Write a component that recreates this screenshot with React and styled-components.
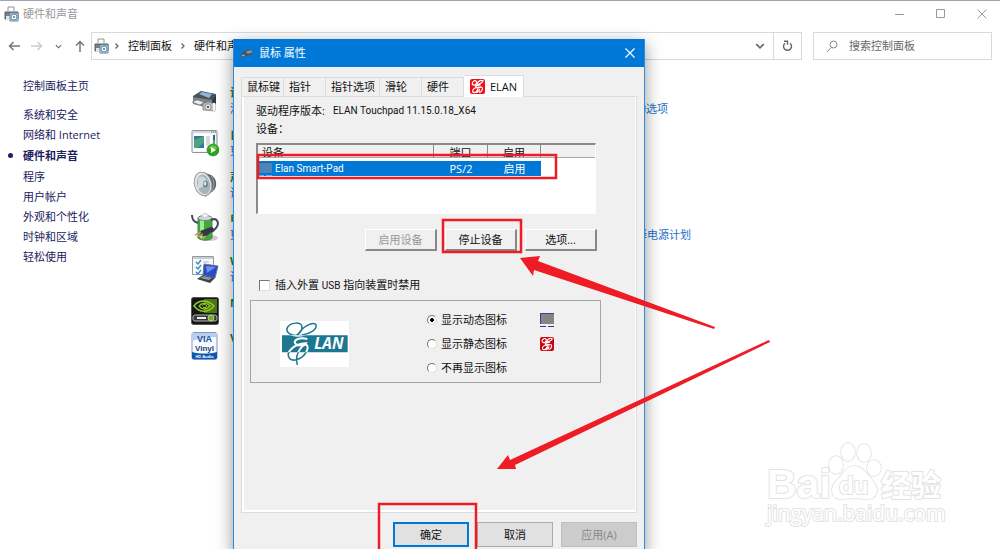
import React from "react";
import styled, { createGlobalStyle, css } from "styled-components";

const GlobalStyle = createGlobalStyle`
  * { box-sizing: border-box; }
  html, body { margin: 0; height: 100%; overflow: hidden; background: #fff; }
  body, button, input, table {
    font-family: "Open Sans", "Noto Sans CJK SC", sans-serif;
    font-size: 11px;
    line-height: 18px;
  }
  button { padding: 0; border: 0; background: none; color: inherit; white-space: nowrap; }
  a { color: inherit; text-decoration: none; }
  svg { display: block; flex: none; }
`;

/* ---------- Control panel window ---------- */

const Desktop = styled.div`
  position: relative;
  min-height: 100vh;
  overflow: hidden;
  border-top: 1px solid #a0a5b5;
  background: #fff;
`;

const WindowBar = styled.header`
  display: flex;
  align-items: center;
  gap: 4px;
  height: 26px;
  padding: 0 12px 0 4px;
  color: #999;
`;

const WindowTitle = styled.span`
  flex: 1;
`;

const WindowControls = styled.div`
  display: flex;
  gap: 29px;
  color: #999;
`;

const IconButton = styled.button`
  display: flex;
  align-items: center;
  justify-content: center;
  width: ${(p) => p.$width || 12}px;
  height: 24px;
  color: ${(p) => p.$color || "inherit"};
`;

const NavBar = styled.nav`
  display: flex;
  align-items: center;
  padding: 5px 8px 0 8px;
`;

const HistoryButtons = styled.div`
  display: flex;
  align-items: center;
  justify-content: space-between;
  width: 78px;
  margin-right: 5px;
`;

const AddressBox = styled.div`
  display: flex;
  flex: 1;
  align-items: center;
  gap: 4px;
  height: 28px;
  padding-left: 2px;
  border: 1px solid #d9d9d9;
  color: #111;
`;

const Crumb = styled.a`
  margin: 0 3px;
`;

const Spacer = styled.span`
  flex: 1;
`;

const RefreshCell = styled.div`
  display: flex;
  align-items: center;
  justify-content: center;
  width: 28px;
  height: 26px;
  margin-left: 3px;
  border-left: 1px solid #d9d9d9;
`;

const SearchBox = styled.label`
  display: flex;
  align-items: center;
  gap: 10px;
  width: 179px;
  height: 28px;
  margin-left: 11px;
  padding-left: 12px;
  border: 1px solid #d9d9d9;
`;

const SearchInput = styled.input`
  flex: 1;
  min-width: 0;
  padding: 0;
  border: 0;
  outline: 0;
  background: transparent;
  &::placeholder { color: #666; opacity: 1; }
`;

const Content = styled.div`
  display: flex;
  padding-top: 16px;
`;

const Sidebar = styled.aside`
  width: 191px;
  padding-left: 23px;
  color: #1b2160;
  line-height: 20px;
`;

const SideHome = styled.a`
  display: block;
  margin-bottom: 9px;
`;

const SideItem = styled.a`
  position: relative;
  display: block;
  ${(p) =>
    p.$active &&
    css`
      padding: 1px 0;
      font-weight: 700;
      &::before {
        content: "";
        position: absolute;
        left: -15px;
        top: 8px;
        width: 5px;
        height: 5px;
        border-radius: 50%;
        background: #1b2160;
      }
    `}
`;

const CategoryList = styled.main`
  flex: 1;
  padding-top: 11px;
`;

const Category = styled.section`
  display: flex;
  gap: 11px;
  height: ${(p) => (p.$compact ? 35 : 42)}px;
`;

const CategoryBody = styled.div`
  line-height: 16px;
  margin-top: -2px;
`;

const CategoryTitle = styled.a`
  display: block;
  color: #15801e;
  font-weight: 700;
`;

const TaskRow = styled.div`
  display: flex;
  justify-content: space-between;
  width: ${(p) => p.$width || 200}px;
  color: #1a6fc9;
`;

/* ---------- Mouse properties dialog ---------- */

const Dialog = styled.section`
  position: absolute;
  left: 233px;
  top: 38px;
  width: 412px;
  border: 1px solid #2a8be0;
  border-top: 0;
  background: #f0f0f0;
  color: #111;
  box-shadow: 0 5px 16px rgba(0, 0, 0, 0.42);
`;

const DialogBar = styled.header`
  display: flex;
  align-items: center;
  height: 28px;
  padding: 0 8px 0 7px;
  gap: 5px;
  background: #0078d7;
  color: #fff;
`;

const DialogBody = styled.div`
  padding: 8px 7px 6px;
`;

const TabList = styled.div`
  display: flex;
  align-items: flex-end;
  height: 21px;
`;

const Tab = styled.button`
  display: flex;
  align-items: center;
  gap: 5px;
  min-width: 42px;
  height: 19px;
  padding: 0 4px 0 5px;
  border: 1px solid #dcdcdc;
  border-width: 1px 1px 0 0;
  &:first-child { padding-right: 3px; border-left-width: 1px; }
  ${(p) =>
    p.$active &&
    css`
      position: relative;
      height: 22px;
      margin-bottom: -1px;
      padding: 0 6px;
      background: #fff;
    `}
`;

const TabPanel = styled.div`
  padding: 5px 39px 129px 14px;
  border: 1px solid #dcdcdc;
  box-shadow: inset 2px -2px 0 #fff, inset -1px 0 0 #fff;
`;

const Latin = styled.span`
  font-family: Roboto, sans-serif;
  font-size: 10px;
`;

const InfoLine = styled.div`
  display: flex;
  gap: 8px;
`;

const ListFrame = styled.div`
  height: 71px;
  margin-top: 5px;
  margin-right: 1px;
  overflow: hidden;
  border: 1px solid #fff;
  border-top: 2px solid #8a8a8a;
  border-left: 2px solid #8a8a8a;
  background: #fff;
`;

const DeviceTable = styled.table`
  width: 100%;
  table-layout: fixed;
  border-collapse: separate;
  border-spacing: 0;
`;

const HeadCell = styled.th`
  width: ${(p) => (p.$width ? p.$width + "px" : "auto")};
  height: 13px;
  padding: 0 0 0 ${(p) => (p.$left ? 4 : 0)}px;
  border-right: ${(p) => (p.$width ? "1px solid #8a8a8a" : "0")};
  border-bottom: 1px solid #aaa;
  background: #f0f0f0;
  font-weight: 400;
  text-align: ${(p) => (p.$left ? "left" : "center")};
`;

const HeadClip = styled.div`
  height: 12px;
  overflow: hidden;
  line-height: 16px;
`;

const Cell = styled.td`
  height: 18px;
  padding: 0;
  border-top: 3px solid #fff;
  background: #0078d7;
  color: #fff;
  line-height: 15px;
  text-align: center;
`;

const DeviceName = styled.div`
  display: flex;
  align-items: center;
  gap: 3px;
  height: 15px;
`;

const ButtonRow = styled.div`
  display: flex;
  justify-content: flex-end;
  gap: 8px;
  margin-top: ${(p) => (p.$footer ? 9 : 15)}px;
`;

const ClassicButton = styled.button`
  width: 72px;
  height: 22px;
  border: 1px solid #fff;
  border-right: 2px solid #888;
  border-bottom: 2px solid #888;
  background: #f0f0f0;
  line-height: 18px;
  &:disabled { color: #999; }
`;

const DialogButton = styled.button`
  width: 76px;
  height: 25px;
  border: 1px solid #adadad;
  background: #e1e1e1;
  ${(p) => p.$primary && "border: 2px solid #0078d7;"}
  &:disabled { border-color: #bfbfbf; background: #ccc; color: #888; }
`;

const CheckLabel = styled.label`
  display: flex;
  align-items: center;
  gap: 5px;
  margin: 25px 0 5px 3px;
`;

const CheckBox = styled.input`
  appearance: none;
  width: 11px;
  height: 11px;
  margin: 0;
  border: 1px solid #ddd;
  border-top-color: #777;
  border-left-color: #777;
  background: #fff;
`;

const IconGroup = styled.fieldset`
  display: flex;
  align-items: center;
  gap: 78px;
  height: 83px;
  margin: 0 -4px 0 -6px;
  padding: 6px 0 2px 29px;
  border: 1px solid #a6a6a6;
`;

const RadioList = styled.div`
  display: flex;
  flex-direction: column;
`;

const RadioRow = styled.div`
  display: flex;
  align-items: center;
  height: 24px;
`;

const RadioLabel = styled.label`
  display: flex;
  align-items: center;
  gap: 4px;
  width: 113px;
`;

const Radio = styled.input`
  appearance: none;
  width: 10px;
  height: 10px;
  margin: 0;
  border: 1px solid #ddd;
  border-top-color: #777;
  border-left-color: #777;
  border-radius: 50%;
  background: #fff;
  &:checked { background: radial-gradient(circle, #000 0 2px, #fff 2px); }
`;

/* ---------- Overlays ---------- */

const Annotations = styled.svg`
  position: absolute;
  left: 0;
  top: -1px;
  pointer-events: none;
`;

const Watermark = styled.div`
  position: absolute;
  right: 54px;
  top: 440px;
  width: 180px;
  height: 88px;
  color: #fff;
  -webkit-text-stroke: 2px #e3e3e3;
  paint-order: stroke fill;
  white-space: nowrap;
`;

const MarkText = styled.span`
  position: absolute;
  left: ${(p) => p.$x}px;
  top: ${(p) => p.$y}px;
  font-family: ${(p) => p.$family || '"Liberation Sans", sans-serif'};
  font-size: ${(p) => p.$size}px;
  font-weight: ${(p) => p.$weight || 700};
  line-height: ${(p) => p.$size}px;
`;

/* ---------- Drawings ---------- */

const PrinterDisc = () => (
  <svg width="15" height="16" viewBox="0 0 15 16">
    <path d="M4 5V1h6v4" fill="#fff" stroke="#8b9299" />
    <path d="M1 6h13v7H1z" fill="#777f86" stroke="#555e66" />
    <path d="M2 10h5v4H2z" fill="#dfe5e8" />
    <path d="M6 7h8v8H6z" fill="#c9dde9" stroke="#6d8495" />
    <circle cx="10" cy="11" r="3" fill="#f5fbff" stroke="#5b89a8" />
    <circle cx="10" cy="11" r="1" fill="#4b7a9c" />
  </svg>
);

const Chevron = ({ down, size = 8 }) => (
  <svg width={size} height={size} viewBox="0 0 8 8" fill="none" stroke="#666" strokeWidth="1.3">
    <path d={down ? "M1 2.5l3 3 3-3" : "M2.5 1.500l2.500 2.500-2.500 2.500"} />
  </svg>
);

const Arrow = ({ rotate = 0, color = "#777" }) => (
  <svg width="12" height="12" viewBox="0 0 12 12" fill="none" stroke={color} strokeWidth="1.5">
    <path d="M1 6h11M5.500 2L1.500 6l4 4" transform={`rotate(${rotate} 6 6)`} />
  </svg>
);

const DevicesIcon = () => (
  <svg width="28" height="28" viewBox="0 0 28 28">
    <path d="M2 9l8-5 15 3-4 7L2 12z" fill="#4b5159" />
    <path d="M8 7l3-2 10 2-3 4z" fill="#8bb5dc" />
    <path d="M2 10l19 3v9L2 17z" fill="#7d8389" />
    <path d="M21 13l4-6v9l-4 6z" fill="#333941" />
    <path d="M1 15l5-2 7 2-4 3z" fill="#eef0f1" stroke="#777" strokeWidth=".6" />
    <path d="M12 16h3l1-1h3l1 1h4v8l-12-1z" fill="#c7c7c2" stroke="#777" strokeWidth=".7" />
    <circle cx="17" cy="20" r="3.2" fill="#eee" stroke="#888" />
    <circle cx="17" cy="20" r="1.3" fill="#666" />
    <path d="M22 16h2v8h-2z" fill="#f4f4ee" />
  </svg>
);

const AutoplayIcon = () => (
  <svg width="28" height="28" viewBox="0 0 28 28">
    <rect x="1" y="1.5" width="25" height="22" rx="1" fill="#f3f4f5" stroke="#8d9296" />
    <path d="M2 2h23v2H2z" fill="#d5d8da" />
    <path d="M20 3h1M22 3h1M24 3h1" stroke="#666" />
    <path d="M3 5h18v17H3z" fill="#fff" />
    <path d="M3 7h10v12H3z" fill="#3972a5" />
    <path d="M3 11l10-4v6l-6 6H3z" fill="#4da483" />
    <path d="M15 8h4M15 10h4M15 12h4M15 14h4M15 16h3" stroke="#b5b5b5" />
    <path d="M23 6v9" stroke="#2669a8" strokeWidth="2" />
    <path d="M23 11v4" stroke="#5aac61" strokeWidth="2" />
    <circle cx="22" cy="21" r="6" fill="#29a51d" stroke="#198713" strokeWidth=".6" />
    <path d="M17.500 19a5 5 0 0 1 9 0c-3 2-6 2-9 0" fill="#66ca4b" />
    <path d="M20 18v6l5-3z" fill="#fff" />
  </svg>
);

const SpeakerIcon = () => (
  <svg width="28" height="28" viewBox="0 0 28 28">
    <path d="M12 1l8 3c6 3 7 12 2 16l-8 6z" fill="#5d6266" />
    <path d="M20 5c4 4 4 13-1 16" stroke="#a4a7a9" fill="none" />
    <ellipse cx="12" cy="13" rx="8.500" ry="12" fill="#e3e5e6" stroke="#9a9d9f" transform="rotate(-14 12 13)" />
    <ellipse cx="12.500" cy="13.500" rx="6.500" ry="10" fill="#a7b3ba" transform="rotate(-14 12 13)" />
    <path d="M7 7c4-4 9 0 10 6L7 18z" fill="#ced9de" />
    <ellipse cx="14.500" cy="13" rx="2.500" ry="3.500" fill="#74838c" />
    <ellipse cx="14" cy="12.500" rx="1.400" ry="2" fill="#d6e1e7" />
  </svg>
);

const PowerIcon = () => (
  <svg width="28" height="28" viewBox="0 0 28 28">
    <ellipse cx="19" cy="25" rx="8" ry="3" fill="#ccc" />
    <path d="M7 5h14v20c-3 3-11 3-14 0z" fill="#3da83c" stroke="#4f8351" />
    <path d="M9 6h4v20l-4-1z" fill="#98ed86" />
    <ellipse cx="14" cy="5" rx="7" ry="2.500" fill="#d4dad6" stroke="#7a817c" />
    <path d="M11 3v-1c1-2 5-2 6 0v1c-1 2-5 2-6 0" fill="#eef4f8" stroke="#a4b1b9" strokeWidth=".6" />
    <path d="M1 2c0 5 2 7 6 8M20 7c6-3 9 3 5 8l-4 4" fill="none" stroke="#414a60" strokeWidth="2" />
    <path d="M9 18l11-4c2 0 4 2 2 4l-8 6-5-2z" fill="#343742" />
    <path d="M4 22l6-3M6 24l6-3M10 26l5-3" stroke="#c29a5b" strokeWidth="1.5" />
  </svg>
);

const MobilityIcon = () => (
  <svg width="28" height="28" viewBox="0 0 28 28">
    <path d="M1.500 1.500h21v18h-21z" fill="#f7f9fb" stroke="#929aa2" />
    <path d="M2 2h20v2H2z" fill="#c6ccd2" />
    <path d="M5 7l2 2 3-4M5 12l2 2 3-4M5 17l2 2 3-4" fill="none" stroke="#2e8fc7" strokeWidth="1.400" />
    <path d="M12 7h6M12 12h4M12 17h3" stroke="#b3b8bd" />
    <path d="M13 9l14 2-3 12-12-3z" fill="#2849c8" stroke="#737a87" />
    <path d="M15 11l10 1-9 6z" fill="#6c90f0" />
    <path d="M6 24l6-4 12 3-5 5z" fill="#3b424c" />
    <path d="M9 23l4-2 8 2-3 2z" fill="#8d98a5" />
  </svg>
);

const NvidiaIcon = () => (
  <svg width="28" height="28" viewBox="0 0 28 28">
    <rect x=".500" y=".500" width="27" height="27" rx="2" fill="#151515" stroke="#555" />
    <path d="M13 2h13v14H13z" fill="#4d7613" />
    <path d="M3 9c4-6 13-7 20 0-6 7-14 7-20 0z" fill="none" stroke="#8cc928" strokeWidth="1.600" />
    <path d="M8 9c2-3 7-4 11 0-4 4-8 4-11 0z" fill="#182209" stroke="#8cc928" strokeWidth="1.300" />
    <path d="M11 9c1-2 3-2 5 0-1 2-3 2-4 1" fill="none" stroke="#a7dc49" />
    <rect x="2" y="18" width="24" height="6" rx="2" fill="#373737" stroke="#b5b5b5" />
    <path d="M6 21h9" stroke="#eee" strokeWidth="2" />
    <circle cx="20" cy="21" r="3" fill="#77aa36" stroke="#aad767" />
  </svg>
);

const ViaIcon = () => (
  <svg width="28" height="28" viewBox="0 0 28 28">
    <rect x="1" y=".500" width="25" height="27" rx="2" fill="#f8fbff" stroke="#7d9bc6" />
    <path d="M1 1h25v4c-8 0-17 1-25 4z" fill="#b8cfee" />
    <text x="13.500" y="10" textAnchor="middle" fontFamily="Liberation Sans" fontSize="9" fontWeight="700" fill="#1551a0">VIA</text>
    <text x="13.500" y="19" textAnchor="middle" fontFamily="Liberation Sans" fontSize="8" fontWeight="700" fill="#173a80">Vinyl</text>
    <path d="M1 20c8 2 17 2 25 0v6l-1 1H2l-1-1z" fill="#0e56ae" />
    <text x="13.500" y="26" textAnchor="middle" fontFamily="Liberation Sans" fontSize="4" fontWeight="700" fill="#fff">HD Audio</text>
  </svg>
);

const MouseIcon = () => (
  <svg width="13" height="12" viewBox="0 0 13 12">
    <path d="M0 8c0-3 7-6 11-5 3 1 1 4-3 5-3 2-8 3-8 0z" fill="#4a535b" />
    <path d="M5 5c3-2 6-2 7 0-2 1-4 1-5 2z" fill="#8f979d" />
    <path d="M1 8l3 1" stroke="#bbb" />
  </svg>
);

const ElanBadge = ({ size = 15, color = "#f20d17" }) => (
  <svg width={size} height={size} viewBox="0 0 44 44">
    <rect width="44" height="44" rx="6" fill={color} />
    <g fill="none" stroke="#fff" strokeWidth="3.500">
      <path d="M18 17C5 20 4 12 10 7c6-5 12 0 9 5l-4 6" />
      <path d="M19 16C24 7 32 2 38 5c1 5-8 9-19 12h12" />
      <path d="M27 18c-8 0-13 3-9 7 3 2 7 1 9-1C15 24 6 30 8 37c3 6 12 2 15-7 2 9-3 12-6 8" />
      <path d="M27 26c8-6 13 1 7 9-6 8-11 1-5-6" />
    </g>
  </svg>
);

const PadIcon = ({ selected }) => (
  <svg width="14" height="14" viewBox="0 0 14 14">
    <path d="M0 0h14v11H0z" fill={selected ? "#4b84b8" : "#858585"} />
    <path d="M0 11V0h14" fill="none" stroke={selected ? "#2b5fae" : "#3c3ca3"} strokeWidth="2" />
    <path d="M0 13.500h6M8 13.500h6" stroke={selected ? "#58aef5" : "#3434a0"} />
  </svg>
);

const ELAN_SCRIPT =
  "M72 42C34 50 13 33 23 18C35 3 64 2 66 18C67 28 58 38 50 42M54 42C66 17 99 1 108 11C112 24 90 39 66 42M82 54C58 48 38 57 46 68C52 76 68 74 76 67C44 69 19 91 26 108C33 125 63 117 77 96C89 77 80 62 66 77C51 94 46 113 52 132";

const ElanLogo = () => (
  <svg width="69" height="46" viewBox="0 0 207 138" role="img" aria-label="ELAN">
    <defs>
      <clipPath id="elan-band">
        <path d="M6 43h197v51H6z" />
      </clipPath>
    </defs>
    <path d="M0 0h207v138H0z" fill="#fff" />
    <path d="M6 43h197v51H6z" fill="#1b7890" />
    <path d={ELAN_SCRIPT} fill="none" stroke="#1b7890" strokeWidth="4.500" />
    <path d={ELAN_SCRIPT} fill="none" stroke="#fff" strokeWidth="6" clipPath="url(#elan-band)" />
    <text x="103" y="85" fontFamily="Open Sans, sans-serif" fontSize="46" fontWeight="700" fontStyle="italic" fill="#fff">LAN</text>
  </svg>
);

/* ---------- Data ---------- */

const SIDE_ITEMS = ["系统和安全", "网络和 Internet", "硬件和声音", "程序", "用户帐户", "外观和个性化", "时钟和区域", "轻松使用"];

const CATEGORIES = [
  { title: "设备和打印机", Icon: DevicesIcon, tasks: ["添加设备", "更改 Windows To Go 启动选项"], width: 438 },
  { title: "自动播放", Icon: AutoplayIcon, tasks: ["更改媒体或设备的默认设置"] },
  { title: "声音", Icon: SpeakerIcon, tasks: ["调整系统音量"] },
  { title: "电源选项", Icon: PowerIcon, tasks: ["更改电池设置", "选择电源计划"], width: 461 },
  { title: "Windows 移动中心", Icon: MobilityIcon, tasks: ["调整常用移动设置"] },
  { title: "NVIDIA 控制面板", Icon: NvidiaIcon, tasks: [], compact: true },
  { title: "VIA HD Audio", Icon: ViaIcon, tasks: [], compact: true },
];

const TABS = ["鼠标键", "指针", "指针选项", "滑轮", "硬件"];

const RADIOS = [
  { label: "显示动态图标", icon: <PadIcon /> },
  { label: "显示静态图标", icon: <ElanBadge size={14} color="#cc0610" /> },
  { label: "不再显示图标" },
];

function MouseDialog() {
  return (
    <Dialog role="dialog" aria-label="鼠标 属性">
      <DialogBar>
        <MouseIcon />
        <WindowTitle>鼠标 属性</WindowTitle>
        <IconButton aria-label="关闭">
          <svg width="10" height="10" viewBox="0 0 10 10" stroke="#fff" strokeWidth="1.200">
            <path d="M.500.500l9 9M9.500.500l-9 9" />
          </svg>
        </IconButton>
      </DialogBar>
      <DialogBody>
        <TabList role="tablist">
          {TABS.map((t) => (
            <Tab key={t} role="tab">{t}</Tab>
          ))}
          <Tab role="tab" aria-selected="true" $active>
            <ElanBadge />
            ELAN
          </Tab>
        </TabList>
        <TabPanel role="tabpanel">
          <InfoLine>
            <span>驱动程序版本:</span>
            <Latin>ELAN Touchpad 11.15.0.18_X64</Latin>
          </InfoLine>
          <InfoLine>设备：</InfoLine>
          <ListFrame>
            <DeviceTable>
              <thead>
                <tr>
                  <HeadCell $width={176} $left><HeadClip>设备</HeadClip></HeadCell>
                  <HeadCell $width={54}><HeadClip>端口</HeadClip></HeadCell>
                  <HeadCell $width={53}><HeadClip>启用</HeadClip></HeadCell>
                  <HeadCell aria-hidden="true" />
                </tr>
              </thead>
              <tbody>
                <tr>
                  <Cell>
                    <DeviceName>
                      <PadIcon selected />
                      <Latin>Elan Smart-Pad</Latin>
                    </DeviceName>
                  </Cell>
                  <Cell>PS/2</Cell>
                  <Cell>启用</Cell>
                </tr>
              </tbody>
            </DeviceTable>
          </ListFrame>
          <ButtonRow>
            <ClassicButton disabled>启用设备</ClassicButton>
            <ClassicButton>停止设备</ClassicButton>
            <ClassicButton>选项...</ClassicButton>
          </ButtonRow>
          <CheckLabel>
            <CheckBox type="checkbox" />
            <span>插入外置 <Latin>USB</Latin> 指向装置时禁用</span>
          </CheckLabel>
          <IconGroup>
            <ElanLogo />
            <RadioList>
              {RADIOS.map((r, i) => (
                <RadioRow key={r.label}>
                  <RadioLabel>
                    <Radio type="radio" name="tray-icon" defaultChecked={i === 0} />
                    {r.label}
                  </RadioLabel>
                  {r.icon}
                </RadioRow>
              ))}
            </RadioList>
          </IconGroup>
        </TabPanel>
        <ButtonRow $footer>
          <DialogButton $primary>确定</DialogButton>
          <DialogButton>取消</DialogButton>
          <DialogButton disabled>应用(A)</DialogButton>
        </ButtonRow>
      </DialogBody>
    </Dialog>
  );
}

export default function App() {
  return (
    <Desktop>
      <GlobalStyle />
      <WindowBar>
        <PrinterDisc />
        <WindowTitle>硬件和声音</WindowTitle>
        <WindowControls>
          <IconButton aria-label="最小化">
            <svg width="10" height="10" viewBox="0 0 10 10" stroke="currentColor"><path d="M0 5.500h9" /></svg>
          </IconButton>
          <IconButton aria-label="最大化">
            <svg width="10" height="10" viewBox="0 0 10 10" fill="none" stroke="currentColor"><path d="M.500.500h8v8h-8z" /></svg>
          </IconButton>
          <IconButton aria-label="关闭">
            <svg width="10" height="10" viewBox="0 0 10 10" stroke="currentColor"><path d="M.500.500l9 9M9.500.500l-9 9" /></svg>
          </IconButton>
        </WindowControls>
      </WindowBar>
      <NavBar>
        <HistoryButtons>
          <IconButton aria-label="后退"><Arrow /></IconButton>
          <IconButton aria-label="前进"><Arrow rotate={180} color="#ccc" /></IconButton>
          <IconButton $width={8} aria-label="历史记录"><Chevron down size={7} /></IconButton>
          <IconButton aria-label="向上"><Arrow rotate={90} /></IconButton>
        </HistoryButtons>
        <AddressBox>
          <PrinterDisc />
          <Chevron />
          <Crumb href="#">控制面板</Crumb>
          <Chevron />
          <Crumb href="#">硬件和声音</Crumb>
          <Spacer />
          <IconButton aria-label="展开"><Chevron down size={10} /></IconButton>
          <RefreshCell>
            <IconButton aria-label="刷新">
              <svg width="11" height="12" viewBox="0 0 11 12" fill="none" stroke="#666" strokeWidth="1.400">
                <path d="M8 3.200A4 4 0 1 1 3 3.200M2 1.200h3.500v3.500" />
              </svg>
            </IconButton>
          </RefreshCell>
        </AddressBox>
        <SearchBox>
          <svg width="13" height="13" viewBox="0 0 13 13" fill="none" stroke="#888">
            <circle cx="7.500" cy="4.500" r="3.500" />
            <path d="M5 7.500L1 12" />
          </svg>
          <SearchInput aria-label="搜索控制面板" placeholder="搜索控制面板" />
        </SearchBox>
      </NavBar>
      <Content>
        <Sidebar>
          <SideHome href="#">控制面板主页</SideHome>
          {SIDE_ITEMS.map((s) => (
            <SideItem key={s} href="#" $active={s === "硬件和声音"}>{s}</SideItem>
          ))}
        </Sidebar>
        <CategoryList>
          {CATEGORIES.map(({ title, Icon, tasks, width, compact }) => (
            <Category key={title} $compact={compact}>
              <Icon />
              <CategoryBody>
                <CategoryTitle href="#">{title}</CategoryTitle>
                <TaskRow $width={width}>
                  {tasks.map((t) => (
                    <a key={t} href="#">{t}</a>
                  ))}
                </TaskRow>
              </CategoryBody>
            </Category>
          ))}
        </CategoryList>
      </Content>

      <MouseDialog />

      <Watermark>
        <MarkText $x={1} $y={23} $size={41}>Bai</MarkText>
        <svg width="180" height="60" viewBox="0 0 180 60" fill="#fff" stroke="#dedede" strokeWidth="1.500">
          <ellipse cx="70" cy="24" rx="7" ry="9" />
          <ellipse cx="82" cy="11" rx="7" ry="9" />
          <ellipse cx="98" cy="12" rx="7" ry="9" />
          <ellipse cx="108" cy="27" rx="7" ry="8" />
          <path d="M88 25c-8 0-11 8-17 14-9 9-5 20 6 19 8-1 14-1 22 0 12 1 16-9 8-18-6-7-10-15-19-15z" />
        </svg>
        <MarkText $x={73} $y={33} $size={24}>du</MarkText>
        <MarkText $x={115} $y={27} $size={30} $family={'"Noto Sans CJK SC", sans-serif'}>经验</MarkText>
        <MarkText $x={1} $y={62} $size={21} $weight={400} $family={'"Open Sans", sans-serif'}>jingyan.baidu.com</MarkText>
      </Watermark>

      <Annotations width="1000" height="549" viewBox="0 0 1000 549" aria-hidden="true">
        <g fill="none" stroke="#ee1c25" strokeWidth="2.500">
          <path d="M258 155h298v23H258z" />
          <path d="M443 220h78v32h-78z" />
          <path d="M379 560V504h97v56" />
        </g>
        <g fill="#ee1c25">
          <path d="M520 258l20-2-2 5 177 66-1 2-180-59-1 6z" />
          <path d="M497 469l11-14 2 5 259-120 1 2-255 123 1 4z" />
        </g>
      </Annotations>
    </Desktop>
  );
}
